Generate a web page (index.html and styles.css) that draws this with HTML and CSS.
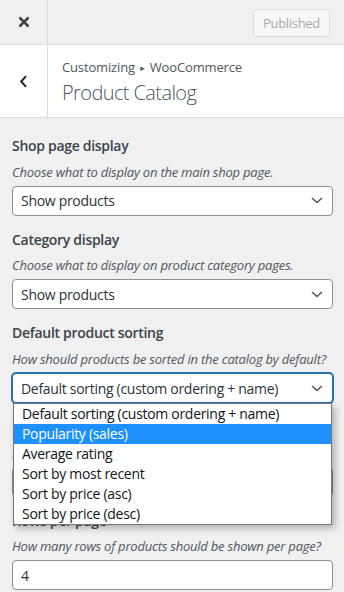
FILE: index.html
```html
<!DOCTYPE html>
<html lang="en">
<head>
	<meta charset="UTF-8">
	<title>Customize: Product Catalog</title>
	<link rel="stylesheet" href="styles.css">
</head>
<body>
	<div id="sidebar">
		<div class="header-actions">
			<button class="close-btn" type="button">
				<svg width="12" height="12" viewBox="0 0 12 12"><path d="M1.5 1.5l9 9M10.5 1.5l-9 9" stroke="#3c434a" stroke-width="2.5" fill="none"/></svg>
			</button>
			<button class="publish-btn" type="button" disabled>Published</button>
		</div>
		<div class="section-title">
			<button class="back-btn" type="button">
				<svg width="9" height="13" viewBox="0 0 9 13"><path d="M7 1.2L2.2 6.5 7 11.8" stroke="#1d2327" stroke-width="2" fill="none"/></svg>
			</button>
			<div class="title-text">
				<span class="crumb">Customizing <span class="sep">&#9656;</span> WooCommerce</span>
				<h3>Product Catalog</h3>
			</div>
		</div>
		<ul class="controls">
			<li class="control">
				<span class="control-title">Shop page display</span>
				<span class="control-desc">Choose what to display on the main shop page.</span>
				<div class="select">
					<span>Show products</span>
					<svg class="arrow" width="12" height="7" viewBox="0 0 12 7"><path d="M1 1l5 4.5L11 1" stroke="#50575e" stroke-width="1.6" fill="none"/></svg>
				</div>
			</li>
			<li class="control">
				<span class="control-title">Category display</span>
				<span class="control-desc">Choose what to display on product category pages.</span>
				<div class="select">
					<span>Show products</span>
					<svg class="arrow" width="12" height="7" viewBox="0 0 12 7"><path d="M1 1l5 4.5L11 1" stroke="#50575e" stroke-width="1.6" fill="none"/></svg>
				</div>
			</li>
			<li class="control">
				<span class="control-title">Default product sorting</span>
				<span class="control-desc">How should products be sorted in the catalog by default?</span>
				<div class="select focused">
					<span>Default sorting (custom ordering + name)</span>
					<svg class="arrow" width="12" height="7" viewBox="0 0 12 7"><path d="M1 1l5 4.5L11 1" stroke="#50575e" stroke-width="1.6" fill="none"/></svg>
					<ul class="options">
						<li>Default sorting (custom ordering + name)</li>
						<li class="hover">Popularity (sales)</li>
						<li>Average rating</li>
						<li>Sort by most recent</li>
						<li>Sort by price (asc)</li>
						<li>Sort by price (desc)</li>
					</ul>
				</div>
			</li>
			<li class="control">
				<span class="control-title">Products per row</span>
				<span class="control-desc">How many products should be shown per row?</span>
				<input class="text-input" type="number" value="4">
			</li>
			<li class="control">
				<span class="control-title">Rows per page</span>
				<span class="control-desc">How many rows of products should be shown per page?</span>
				<input class="text-input" type="number" value="4">
			</li>
		</ul>
	</div>
</body>
</html>
```

FILE: styles.css
```css
* {
	margin: 0;
	padding: 0;
	box-sizing: border-box;
}
html, body {
	height: 100%;
	overflow: hidden;
}
body {
	font-family: "Open Sans", "Noto Sans", sans-serif;
	font-size: 13px;
	letter-spacing: -0.3px;
	color: #3c434a;
	background: #f0f0f1;
}
button, input {
	font-family: inherit;
	letter-spacing: inherit;
	outline: none;
}
li {
	list-style: none;
}

/* top bar */
.header-actions {
	display: flex;
	justify-content: space-between;
	align-items: flex-start;
	height: 45px;
	border-bottom: 1px solid #dcdcde;
	background: #f0f0f1;
}
.close-btn {
	width: 48px;
	height: 44px;
	display: flex;
	align-items: center;
	justify-content: center;
	background: none;
	border: none;
	border-right: 1px solid #dcdcde;
}
.publish-btn {
	margin: 9px 14px 0 0;
	width: 77px;
	height: 28px;
	font-size: 13px;
	color: #a7aaad;
	background: #f6f7f7;
	border: 1px solid #dcdcde;
	border-radius: 3px;
}

/* section heading */
.section-title {
	display: flex;
	height: 73px;
	background: #fff;
	border-bottom: 1px solid #dcdcde;
}
.back-btn {
	width: 48px;
	flex: none;
	display: flex;
	align-items: center;
	justify-content: center;
	background: none;
	border: none;
	border-right: 1px solid #dcdcde;
}
.title-text {
	padding: 12px 0 0 14px;
}
.crumb {
	display: block;
	font-size: 13px;
	line-height: 20px;
	letter-spacing: -0.15px;
	color: #50575e;
}
.crumb .sep {
	margin: 0 2px;
	font-size: 9px;
	vertical-align: 1px;
	font-family: "DejaVu Sans", sans-serif;
}
.title-text h3 {
	font-size: 20px;
	font-weight: 300;
	line-height: 30px;
	letter-spacing: -0.6px;
	color: #50575e;
}

/* controls */
.controls {
	padding: 16px 11px 0 12px;
}
.control {
	margin-bottom: 12px;
}
.control-title {
	display: block;
	font-size: 14px;
	font-weight: 600;
	line-height: 1.75;
	margin-bottom: 4px;
	color: #3c434a;
}
.control-desc {
	display: block;
	font-style: italic;
	font-size: 13px;
	line-height: 1.4;
	margin-bottom: 5px;
	letter-spacing: -0.22px;
	white-space: nowrap;
	color: #50575e;
}
.select {
	position: relative;
	display: flex;
	align-items: center;
	justify-content: space-between;
	height: 30px;
	padding: 0 9px 0 8px;
	background: #fff;
	border: 1px solid #8c8f94;
	border-radius: 4px;
	font-size: 14px;
	color: #2c3338;
}
.select.focused {
	border-color: #2271b1;
	box-shadow: 0 0 0 1px #2271b1;
}
.select .options {
	position: absolute;
	top: 100%;
	left: 0;
	right: 0;
	z-index: 10;
	margin-top: 1px;
	background: #fff;
	border: 1px solid #767676;
	box-shadow: 3px 3px 7px rgba(0, 0, 0, 0.28);
}
.select .options li {
	height: 20px;
	line-height: 20px;
	padding: 0 8px;
	color: #101517;
	white-space: nowrap;
}
.select .options li.hover {
	background: #1e90ff;
	color: #fff;
}
.text-input {
	display: block;
	width: 100%;
	height: 30px;
	padding: 0 8px;
	font-size: 14px;
	color: #2c3338;
	background: #fff;
	border: 1px solid #8c8f94;
	border-radius: 4px;
	-moz-appearance: textfield;
}
.text-input::-webkit-inner-spin-button,
.text-input::-webkit-outer-spin-button {
	-webkit-appearance: none;
}
```
